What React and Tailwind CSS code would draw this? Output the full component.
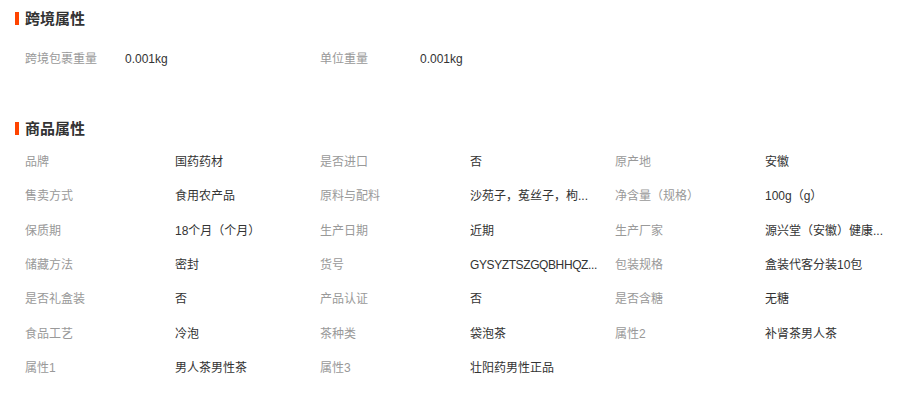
import React from 'react';

const crossBorder = [
  ['跨境包裹重量', '0.001kg'],
  ['单位重量', '0.001kg'],
];

const attrs = [
  ['品牌', '国药药材'],
  ['是否进口', '否'],
  ['原产地', '安徽'],
  ['售卖方式', '食用农产品'],
  ['原料与配料', '沙苑子，菟丝子，枸...'],
  ['净含量（规格）', '100g（g）'],
  ['保质期', '18个月（个月）'],
  ['生产日期', '近期'],
  ['生产厂家', '源兴堂（安徽）健康...'],
  ['储藏方法', '密封'],
  ['货号', 'GYSYZTSZGQBHHQZ...'],
  ['包装规格', '盒装代客分装10包'],
  ['是否礼盒装', '否'],
  ['产品认证', '否'],
  ['是否含糖', '无糖'],
  ['食品工艺', '冷泡'],
  ['茶种类', '袋泡茶'],
  ['属性2', '补肾茶男人茶'],
  ['属性1', '男人茶男性茶'],
  ['属性3', '壮阳药男性正品'],
];

const SectionTitle = ({ children, className = '' }) => (
  <div className={`flex items-center pl-[15px] ${className}`}>
    <span className="w-[4px] h-[13px] bg-[#ff4400] mr-[6px]" />
    <span className="text-[15px] font-bold text-[#333] leading-none">{children}</span>
  </div>
);

export default function App() {
  return (
    <div
      className="w-[920px] h-[395px] bg-white overflow-hidden text-[12px] pt-[1px]"
      style={{ fontFamily: '"Liberation Sans", Tahoma, "Noto Sans CJK SC", sans-serif' }}
    >
      <SectionTitle className="h-[34px]">跨境属性</SectionTitle>

      <div className="mt-[7px] pl-[25px] grid grid-cols-[100px_195px_100px_195px]">
        {crossBorder.map(([label, value]) => (
          <React.Fragment key={label}>
            <div className="h-[34px] flex items-center text-[#999]">{label}</div>
            <div className="h-[34px] flex items-center text-[#333]">{value}</div>
          </React.Fragment>
        ))}
      </div>

      <SectionTitle className="mt-[36px] h-[33px]">商品属性</SectionTitle>

      <div className="pl-[25px] grid grid-cols-[150px_145px_150px_145px_150px_145px]">
        {attrs.map(([label, value]) => (
          <React.Fragment key={label}>
            <div className="h-[34.33px] flex items-center text-[#999] whitespace-nowrap">{label}</div>
            <div
              className={`h-[34.33px] flex items-center text-[#333] whitespace-nowrap ${
                label === '货号' ? 'tracking-[-0.4px]' : ''
              }`}
            >
              {value}
            </div>
          </React.Fragment>
        ))}
      </div>
    </div>
  );
}
